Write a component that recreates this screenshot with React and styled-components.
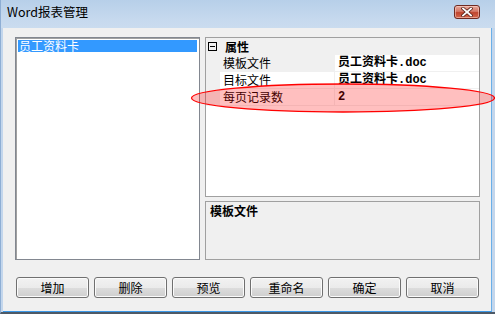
import React from 'react';
import styled, { createGlobalStyle } from 'styled-components';

const GlobalStyle = createGlobalStyle`
  html, body {
    margin: 0;
    padding: 0;
    background: #f0f0f0;
  }
  body {
    font-family: "Noto Sans CJK SC", "Liberation Sans", sans-serif;
    font-size: 12px;
    color: #000;
  }
`;

const Window = styled.div`
  position: relative;
  width: 495px;
  height: 314px;
  box-sizing: border-box;
  display: flex;
  flex-direction: column;
  background: #c3d6ec;
  border-left: 1px solid #8eaed4;
  border-bottom: 2px solid #4d5966;
`;

const TitleBar = styled.div`
  height: 28px;
  flex: none;
  display: flex;
  justify-content: space-between;
  padding: 0 15px 0 6px;
  background: linear-gradient(#b7cfe9, #c6d9ee 70%, #cadcef);
`;

const Title = styled.span`
  font-size: 12.5px;
  line-height: 28px;
  margin-top: -2px;
  color: #000;
`;

const CloseButton = styled.div`
  width: 26px;
  height: 14px;
  margin-top: 5px;
  box-sizing: border-box;
  border: 1px solid #6f2a22;
  border-radius: 3px;
  background: linear-gradient(#e8a99c, #d47766 45%, #c0452f 55%, #d4684e);
  box-shadow: inset 0 0 0 1px rgba(255, 220, 210, 0.5);
  display: flex;
  align-items: center;
  justify-content: center;
`;

const Client = styled.div`
  flex: 1;
  margin: 0 3px 0 2px;
  padding: 9px 11px 13px 12px;
  display: flex;
  flex-direction: column;
  background: #f0f0f0;
  border-right: 1px solid #6aafe9;
  border-bottom: 1px solid #3b98e8;
`;

const Main = styled.div`
  display: flex;
  gap: 5px;
  height: 223px;
`;

const ListBox = styled.div`
  width: 185px;
  box-sizing: border-box;
  background: #fff;
  border: 1px solid #828790;
  box-shadow: inset 1px 1px 0 #a0a0a0;
  padding: 2px 2px;
`;

const ListItem = styled.div`
  height: 12px;
  line-height: 12px;
  padding-left: 1px;
  color: ${(p) => (p.selected ? '#fff' : '#000')};
  background: ${(p) => (p.selected ? '#3399ff' : 'transparent')};
  white-space: nowrap;
`;

const RightColumn = styled.div`
  width: 275px;
  display: flex;
  flex-direction: column;
  gap: 4px;
`;

const Grid = styled.div`
  height: 160px;
  box-sizing: border-box;
  border: 1px solid #a0a0a0;
  background: #fff;
`;

const CategoryRow = styled.div`
  height: 17px;
  display: flex;
  align-items: center;
  background: #f0f0f0;
  font-weight: bold;
`;

const Toggle = styled.span`
  width: 9px;
  height: 9px;
  box-sizing: border-box;
  margin: 0 8px 0 2px;
  border: 1px solid #000;
  display: flex;
  align-items: center;
  justify-content: center;
  &::after {
    content: '';
    width: 5px;
    height: 1px;
    background: #000;
  }
`;

const PropRow = styled.div`
  height: 17px;
  display: grid;
  grid-template-columns: 14px 114px 1px 1fr;
  border-bottom: 1px solid #f0f0f0;
  box-sizing: border-box;
`;

const Margin = styled.div`
  background: #f0f0f0;
`;

const Sep = styled.div`
  background: #f0f0f0;
`;

const NameCell = styled.div`
  padding-left: 3px;
  line-height: 16px;
  background: ${(p) => (p.selected ? '#f0f0f0' : '#fff')};
  white-space: nowrap;
`;

const ValueCell = styled.div`
  padding-left: 3px;
  line-height: 16px;
  font-family: "Liberation Mono", "Noto Sans CJK SC", monospace;
  font-weight: bold;
  white-space: nowrap;
`;

const Description = styled.div`
  flex: 1;
  box-sizing: border-box;
  border: 1px solid #a0a0a0;
  background: #f0f0f0;
  padding: 1px 4px;
  font-weight: bold;
  line-height: 16px;
`;

const ButtonRow = styled.div`
  display: flex;
  gap: 5px;
  margin-top: 17px;
  padding-left: 1px;
`;

const Button = styled.button`
  width: 73px;
  height: 21px;
  padding: 0;
  font-family: inherit;
  font-size: 12px;
  color: #000;
  border: 1px solid #707070;
  border-radius: 3px;
  background: linear-gradient(#f2f2f2 0%, #ebebeb 50%, #dddddd 50%, #cfcfcf 100%);
  box-shadow: inset 0 0 0 1px #fbfbfb;
`;

const Highlight = styled.svg`
  position: absolute;
  left: 189px;
  top: 83px;
  pointer-events: none;
`;

const props = [
  { name: '模板文件', value: '员工资料卡.doc', selected: true },
  { name: '目标文件', value: '员工资料卡.doc' },
  { name: '每页记录数', value: '2' },
];

const buttons = ['增加', '删除', '预览', '重命名', '确定', '取消'];

export default function App() {
  return (
    <>
      <GlobalStyle />
      <Window>
        <TitleBar>
          <Title>Word报表管理</Title>
          <CloseButton>
            <svg width="12" height="10" viewBox="0 0 12 10">
              <path d="M2 1.5 L10 8.5 M10 1.5 L2 8.5" stroke="#5a2018" strokeWidth="3.4" strokeLinecap="square" />
              <path d="M2 1.5 L10 8.5 M10 1.5 L2 8.5" stroke="#fff" strokeWidth="1.8" strokeLinecap="square" />
            </svg>
          </CloseButton>
        </TitleBar>
        <Client>
          <Main>
            <ListBox>
              <ListItem selected>员工资料卡</ListItem>
            </ListBox>
            <RightColumn>
              <Grid>
                <CategoryRow>
                  <Toggle />
                  属性
                </CategoryRow>
                {props.map((p) => (
                  <PropRow key={p.name}>
                    <Margin />
                    <NameCell selected={p.selected}>{p.name}</NameCell>
                    <Sep />
                    <ValueCell>{p.value}</ValueCell>
                  </PropRow>
                ))}
              </Grid>
              <Description>模板文件</Description>
            </RightColumn>
          </Main>
          <ButtonRow>
            {buttons.map((b) => (
              <Button key={b}>{b}</Button>
            ))}
          </ButtonRow>
        </Client>
        <Highlight width="306" height="31" viewBox="0 0 306 31">
          <ellipse cx="153" cy="15" rx="151.5" ry="14" fill="rgba(255,0,0,0.25)" stroke="#ff0000" strokeWidth="1.3" />
        </Highlight>
      </Window>
    </>
  );
}
